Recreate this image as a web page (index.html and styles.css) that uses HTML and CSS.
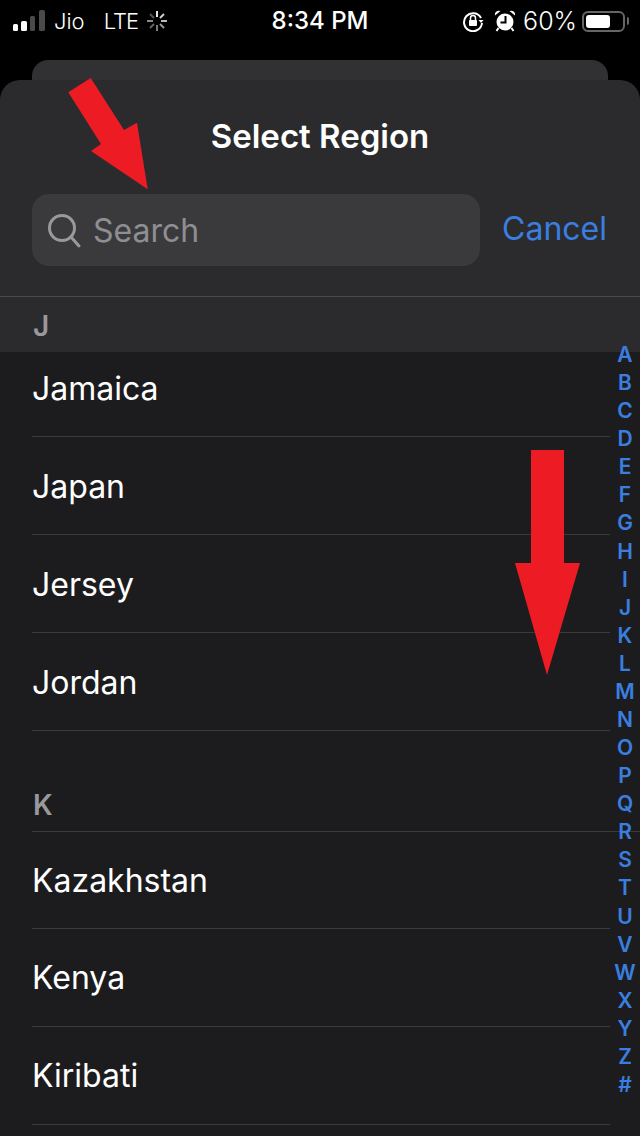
FILE: index.html
```html
<!DOCTYPE html>
<html lang="en">
  <head>
    <meta charset="UTF-8" />
    <meta name="viewport" content="width=device-width, initial-scale=1.0" />
    <title>Select Region</title>
    <link rel="stylesheet" href="styles.css">
  </head>
  <body>
    <div class="status-bar">
      <div class="status-left">
        <svg class="signal" width="34" height="24" viewBox="0 0 34 24">
          <rect x="1" y="15" width="5" height="7" rx="1.5" fill="#fff" />
          <rect x="9" y="12" width="6" height="10" rx="1.5" fill="#fff" />
          <rect x="18" y="7" width="5" height="15" rx="1.5" fill="#4a4a4a" />
          <rect x="27" y="1" width="6" height="21" rx="1.5" fill="#4a4a4a" />
        </svg>
        <span class="carrier">Jio</span>
        <span class="network">LTE</span>
        <svg class="spinner" width="22" height="22" viewBox="0 0 22 22" stroke-width="2" stroke-linecap="butt">
          <path d="M11 1v6" stroke="#e6e6e6" />
          <path d="M18 4l-4 4" stroke="#d0d0d0" />
          <path d="M21 11h-6" stroke="#b8b8b8" />
          <path d="M18 18l-4-4" stroke="#9a9a9a" />
          <path d="M11 21v-6" stroke="#7a7a7a" />
          <path d="M4 18l4-4" stroke="#666" />
          <path d="M1 11h6" stroke="#8a8a8a" />
          <path d="M4 4l4 4" stroke="#555" />
        </svg>
      </div>
      <div class="status-time">8:34 PM</div>
      <div class="status-right">
        <svg class="rotation" width="22" height="22" viewBox="0 0 22 22" fill="none">
          <path d="M19 8A9 9 0 1 0 20 13" stroke="#fff" stroke-width="2" />
          <path d="M16.5 10h5l-2.5 3z" fill="#fff" />
          <rect x="7" y="10" width="8" height="6" rx="1" fill="#fff" />
          <path d="M8.5 10V8a2.5 2.5 0 0 1 5 0v2" stroke="#fff" stroke-width="1.5" />
        </svg>
        <svg class="alarm" width="22" height="24" viewBox="0 0 22 24">
          <circle cx="11" cy="13" r="8.5" fill="#fff" />
          <path d="M1 6.5A4 4 0 0 1 6.5 2zM21 6.500A4 4 0 0 0 15.500 2z" fill="#fff" />
          <path d="M4.500 19l-2 3M17.500 19l2 3" stroke="#fff" stroke-width="2" />
          <path d="M11.500 7v6.500H6.500" stroke="#000" stroke-width="2" fill="none" />
        </svg>
        <span class="battery-pct">60%</span>
        <div class="battery">
          <div class="battery-fill"></div>
        </div>
        <div class="battery-cap"></div>
      </div>
    </div>

    <div class="back-card"></div>

    <div class="sheet">
      <h1 class="title">Select Region</h1>
      <div class="search-row">
        <div class="search-box">
          <svg class="search-icon" width="34" height="35" viewBox="0 0 34 35" fill="none" stroke="#98989d" stroke-width="3">
            <circle cx="15" cy="15" r="12.500" />
            <path d="M24 24l8 9" stroke-linecap="round" />
          </svg>
          <span class="search-text">Search</span>
        </div>
        <span class="cancel">Cancel</span>
      </div>

      <div class="section-head first">J</div>
      <div class="list">
        <div class="row top">Jamaica</div>
        <div class="row">Japan</div>
        <div class="row">Jersey</div>
        <div class="row">Jordan</div>
        <div class="section-gap">K</div>
        <div class="row short">Kazakhstan</div>
        <div class="row low">Kenya</div>
        <div class="row low">Kiribati</div>
      </div>

      <div class="index">
        <span>A</span><span>B</span><span>C</span><span>D</span><span>E</span><span>F</span><span>G</span>
        <span>H</span><span>I</span><span>J</span><span>K</span><span>L</span><span>M</span><span>N</span>
        <span>O</span><span>P</span><span>Q</span><span>R</span><span>S</span><span>T</span><span>U</span>
        <span>V</span><span>W</span><span>X</span><span>Y</span><span>Z</span><span>#</span>
      </div>
    </div>

    <svg class="arrows" width="640" height="1136" viewBox="0 0 640 1136">
      <polygon points="90.700,78 68.300,92.300 101,144 91,151 147.700,189.300 137,122.700 124,130" fill="#ed1c24" />
      <polygon points="531,450 564,450 564,563 580,563 547,675 515,563 531,563" fill="#ed1c24" />
    </svg>
  </body>
</html>
```

FILE: styles.css
```css
html,
body {
  margin: 0;
  padding: 0;
}
body {
  position: relative;
  width: 640px;
  height: 1136px;
  overflow: hidden;
  background: #000;
  color: #fff;
  font-family: Inter, "Liberation Sans", sans-serif;
}
.status-bar {
  height: 60px;
  padding: 0 11px 0 12px;
  box-sizing: border-box;
  display: flex;
  justify-content: space-between;
  align-items: flex-start;
  position: relative;
}
.status-left,
.status-right {
  display: flex;
  align-items: center;
  height: 42px;
  font-size: 22px;
  font-weight: 300;
}
.signal {
  margin-right: 8px;
}
.network {
  margin-left: 19px;
  letter-spacing: -1px;
}
.spinner {
  margin-left: 8px;
}
.status-time {
  position: absolute;
  left: 0;
  right: 0;
  top: 0;
  line-height: 42px;
  text-align: center;
  font-size: 24px;
  font-weight: 500;
}
.rotation {
  margin-right: 10px;
}
.alarm {
  margin-right: 7px;
}
.battery-pct {
  font-size: 25px;
}
.battery {
  margin-left: 5px;
  width: 43px;
  height: 21px;
  box-sizing: border-box;
  border: 2px solid #666;
  border-radius: 6px;
  padding: 2px;
}
.battery-fill {
  width: 24px;
  height: 13px;
  background: #fff;
  border-radius: 3px;
}
.battery-cap {
  margin-left: 2px;
  width: 2px;
  height: 8px;
  background: #666;
  border-radius: 0 2px 2px 0;
}
.back-card {
  height: 20px;
  margin: 0 32px;
  background: #313133;
  border-radius: 16px 16px 0 0;
}
.sheet {
  position: relative;
  height: 1056px;
  overflow: hidden;
  background: #2b2b2d;
  border-radius: 20px 20px 0 0;
}
.title {
  margin: 0;
  height: 114px;
  line-height: 112px;
  text-align: center;
  font-size: 33px;
  font-weight: 600;
}
.search-row {
  display: flex;
  align-items: center;
  padding: 0 33px 30px 32px;
  height: 103px;
  box-sizing: border-box;
  border-bottom: 1px solid #4a4a4c;
}
.search-box {
  width: 448px;
  height: 72px;
  display: flex;
  align-items: center;
  box-sizing: border-box;
  padding-left: 15px;
  background: #3a3a3c;
  border-radius: 17px;
}
.search-text {
  margin-left: 12px;
  font-size: 32px;
  color: #8e8e93;
}
.cancel {
  margin-left: auto;
  margin-bottom: 4px;
  font-size: 32px;
  color: #3a7fe0;
}
.section-head {
  height: 55px;
  line-height: 58px;
  padding-left: 33px;
  font-size: 28px;
  font-weight: 600;
  color: #98989d;
}
.list {
  height: 784px;
  background: #1c1c1e;
}
.row {
  height: 98px;
  line-height: 100px;
  box-sizing: border-box;
  margin-left: 32px;
  margin-right: 30px;
  border-bottom: 1px solid #3a3a3c;
  font-size: 32px;
}
.row.top {
  height: 85px;
  line-height: 74px;
}
.row.short {
  height: 97px;
  line-height: 98px;
}
.row.low {
  line-height: 98px;
}
.section-gap {
  height: 101px;
  box-sizing: border-box;
  margin-left: 32px;
  padding: 57px 0 0 1px;
  line-height: 34px;
  border-bottom: 1px solid #3a3a3c;
  font-size: 28px;
  font-weight: 600;
  color: #98989d;
}
.index {
  position: absolute;
  top: 261px;
  right: 0;
  width: 30px;
  display: flex;
  flex-direction: column;
  align-items: center;
  font-size: 21px;
  font-weight: 600;
  color: #3a7fe0;
}
.index span {
  height: 28.08px;
  line-height: 28px;
}
.arrows {
  position: absolute;
  left: 0;
  top: 0;
}
```
